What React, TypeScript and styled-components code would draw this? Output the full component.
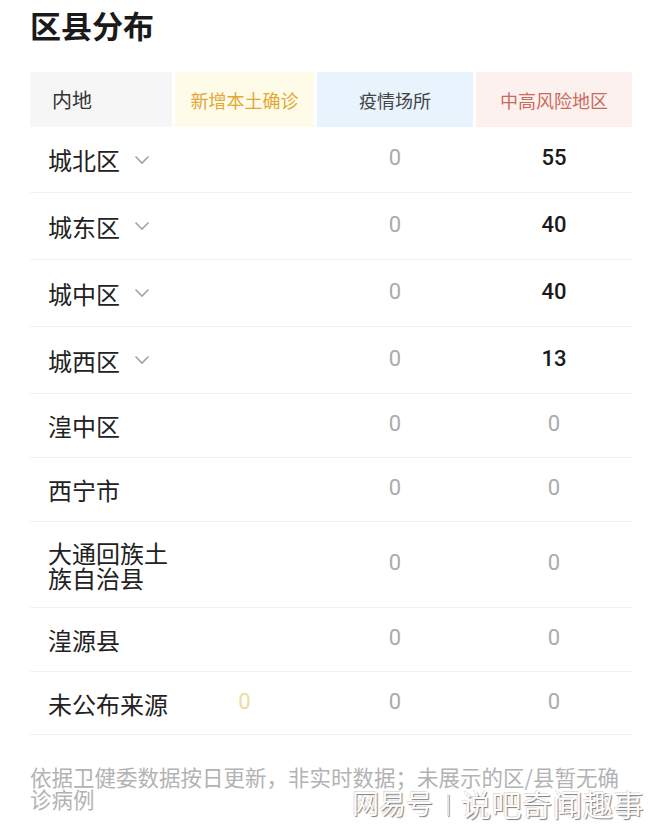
import React from 'react';
import styled, { createGlobalStyle } from 'styled-components';

const GlobalStyle = createGlobalStyle`
    body {
        margin: 0;
        background: #fff;
        font-family: "Noto Sans CJK SC", "Noto Sans", sans-serif;
    }
`;

const COLS = '142px 139px 156px 156px';

const Page = styled.div`
    position: relative;
    width: 660px;
    height: 840px;
    box-sizing: border-box;
    padding: 5px 28px 0 30px;
    overflow: hidden;
`;

const Title = styled.h1`
    margin: 0;
    font-size: 31px;
    line-height: 40px;
    font-weight: 700;
    color: #1a1a1a;
`;

const HeaderRow = styled.div`
    display: grid;
    grid-template-columns: ${COLS};
    column-gap: 3px;
    height: 55px;
    margin-top: 27px;
`;

const HeaderCell = styled.div<{ $bg: string; $color: string; $left?: boolean; $size?: number }>`
    display: flex;
    align-items: center;
    justify-content: ${p => (p.$left ? 'flex-start' : 'center')};
    padding-left: ${p => (p.$left ? '22px' : '0')};
    background: ${p => p.$bg};
    color: ${p => p.$color};
    font-size: ${p => p.$size || 18}px;
`;

const Row = styled.div<{ $h: number }>`
    display: grid;
    grid-template-columns: ${COLS};
    column-gap: 3px;
    align-items: center;
    height: ${p => p.$h}px;
    box-sizing: border-box;
    border-bottom: 1px solid #f1f1f1;
`;

const Name = styled.div`
    display: flex;
    align-items: center;
    gap: 14px;
    padding-left: 18px;
    font-size: 24px;
    line-height: 25px;
    color: #222;
`;

const Num = styled.div<{ $color?: string; $bold?: boolean }>`
    text-align: center;
    font-family: Roboto, "Noto Sans", sans-serif;
    font-size: 22px;
    line-height: 26px;
    color: ${p => p.$color || '#ababab'};
    font-weight: ${p => (p.$bold ? 500 : 400)};
    margin-top: -3px;
`;

const Note = styled.p`
    margin: 31px 0 0;
    max-width: 600px;
    font-size: 21.5px;
    line-height: 22px;
    color: #b3b3b3;
`;

const Watermark = styled.div`
    position: absolute;
    right: 16px;
    top: 788px;
    display: flex;
    align-items: center;
    line-height: 30px;
    color: #fdfdfd;
    text-shadow: 1px 1px 1px rgba(0, 0, 0, 0.5), -1px -1px 0 rgba(0, 0, 0, 0.12);
    white-space: nowrap;
`;

const WmBrand = styled.span`
    font-size: 27px;
    margin-right: 2px;
`;

const WmBar = styled.span`
    width: 2px;
    height: 22px;
    margin: 4px 12px 0 12px;
    background: #e6e6e6;
    box-shadow: 1px 1px 1px rgba(0, 0, 0, 0.35);
`;

const WmName = styled.span`
    font-size: 30px;
    letter-spacing: 0.5px;
`;

const Chevron = () => (
    <svg width="16" height="10" viewBox="0 0 16 10">
        <path d="M1.5 1.5 L8 8 L14.5 1.5" fill="none" stroke="#a3a3a3" strokeWidth="1.6" />
    </svg>
);

type Item = {
    name: string;
    expand?: boolean;
    local?: string;
    places: string;
    risk: string;
    h: number;
};

const rows: Item[] = [
    { name: '城北区', expand: true, places: '0', risk: '55', h: 66 },
    { name: '城东区', expand: true, places: '0', risk: '40', h: 67 },
    { name: '城中区', expand: true, places: '0', risk: '40', h: 67 },
    { name: '城西区', expand: true, places: '0', risk: '13', h: 67 },
    { name: '湟中区', places: '0', risk: '0', h: 64 },
    { name: '西宁市', places: '0', risk: '0', h: 64 },
    { name: '大通回族土族自治县', places: '0', risk: '0', h: 86 },
    { name: '湟源县', places: '0', risk: '0', h: 64 },
    { name: '未公布来源', local: '0', places: '0', risk: '0', h: 63 },
];

export default function App() {
    return (
        <Page>
            <GlobalStyle />
            <Title>区县分布</Title>
            <HeaderRow>
                <HeaderCell $bg="#f6f6f6" $color="#333" $left $size={20}>内地</HeaderCell>
                <HeaderCell $bg="#fffbe9" $color="#e3a736">新增本土确诊</HeaderCell>
                <HeaderCell $bg="#e9f3fd" $color="#444">疫情场所</HeaderCell>
                <HeaderCell $bg="#fdf1ef" $color="#c96a5c">中高风险地区</HeaderCell>
            </HeaderRow>
            {rows.map(r => (
                <Row key={r.name} $h={r.h}>
                    <Name>
                        <span>{r.name}</span>
                        {r.expand && <Chevron />}
                    </Name>
                    <Num $color="#ecdc9f">{r.local || ''}</Num>
                    <Num>{r.places}</Num>
                    {r.risk === '0' ? <Num>{r.risk}</Num> : <Num $color="#1a1a1a" $bold>{r.risk}</Num>}
                </Row>
            ))}
            <Note>依据卫健委数据按日更新，非实时数据；未展示的区/县暂无确诊病例</Note>
            <Watermark>
                <WmBrand>网易号</WmBrand>
                <WmBar />
                <WmName>说吧奇闻趣事</WmName>
            </Watermark>
        </Page>
    );
}
